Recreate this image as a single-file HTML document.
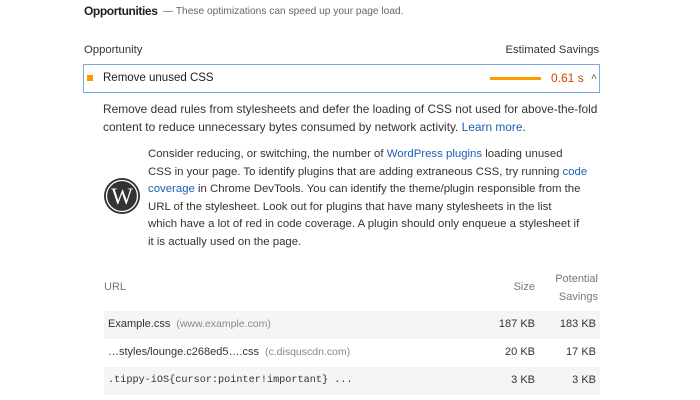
<!DOCTYPE html>
<html><head><style>
*{margin:0;padding:0;box-sizing:border-box}
body{width:700px;height:400px;background:#fff;font-family:"Liberation Sans",sans-serif;color:#212121;position:relative;overflow:hidden}
.a{position:absolute;white-space:nowrap}
a{color:#1a5fb4;text-decoration:none}
.p{color:#333}
</style></head><body>
<div class="a" style="left:84px;top:4px;font-size:12px;font-weight:bold;color:#212121;letter-spacing:-0.4px">Opportunities</div>
<div class="a" style="left:163px;top:6px;font-size:10.2px;color:#666">— These optimizations can speed up your page load.</div>
<div class="a" style="left:84px;top:44px;font-size:11.3px;color:#333">Opportunity</div>
<div class="a" style="right:101px;top:44px;font-size:11.3px;color:#333">Estimated Savings</div>
<div class="a" style="left:83px;top:64px;width:517px;height:29px;border:1px solid #7aa7e6"></div>
<div class="a" style="left:87px;top:75px;width:6px;height:6px;background:#f90"></div>
<div class="a" style="left:103px;top:72px;font-size:11.5px;color:#212121">Remove unused CSS</div>
<div class="a" style="left:490px;top:77px;width:51px;height:3px;background:#f90"></div>
<div class="a" style="left:551px;top:71px;font-size:12px;color:#d14900">0.61 s</div>
<div class="a" style="left:591px;top:72px;font-size:10px;color:#555">&#x2c4;</div>
<div class="a p" style="left:103px;top:100px;font-size:11.9px;line-height:18px">Remove dead rules from stylesheets and defer the loading of CSS not used for above-the-fold<br>content to reduce unnecessary bytes consumed by network activity. <a>Learn more</a>.</div>
<svg class="a" style="left:103px;top:177px" width="38" height="38" viewBox="0 0 38 38">
<circle cx="19" cy="19" r="18" fill="#333"/>
<circle cx="19" cy="19" r="15.5" fill="none" stroke="#fff" stroke-width="1.3"/>
<text x="19" y="27" text-anchor="middle" font-family="Liberation Serif,serif" font-size="23" fill="#fff">W</text>
</svg>
<div class="a p" style="left:148px;top:146px;font-size:11.4px;line-height:17.5px">Consider reducing, or switching, the number of <a>WordPress plugins</a> loading unused<br>CSS in your page. To identify plugins that are adding extraneous CSS, try running <a>code</a><br><a>coverage</a> in Chrome DevTools. You can identify the theme/plugin responsible from the<br>URL of the stylesheet. Look out for plugins that have many stylesheets in the list<br>which have a lot of red in code coverage. A plugin should only enqueue a stylesheet if<br>it is actually used on the page.</div>
<div class="a" style="left:104px;top:281px;font-size:11px;color:#777">URL</div>
<div class="a" style="right:165px;top:281px;font-size:11px;color:#777">Size</div>
<div class="a" style="right:102px;top:270px;font-size:11px;color:#777;text-align:right;line-height:18px">Potential<br>Savings</div>
<div class="a" style="left:104px;top:311px;width:496px;height:28px;background:#f5f5f5"></div>
<div class="a" style="left:104px;top:367px;width:496px;height:28px;background:#f5f5f5"></div>
<div class="a" style="left:108px;top:318px;font-size:11px;color:#333">Example.css <span style="color:#888;font-size:10.5px">&nbsp;(www.example.com)</span></div>
<div class="a" style="right:165px;top:318px;font-size:11px;color:#333">187 KB</div>
<div class="a" style="right:104px;top:318px;font-size:11px;color:#333">183 KB</div>
<div class="a" style="left:108px;top:346px;font-size:11px;color:#333">…styles/lounge.c268ed5….css <span style="color:#888;font-size:10.5px">&nbsp;(c.disquscdn.com)</span></div>
<div class="a" style="right:165px;top:346px;font-size:11px;color:#333">20 KB</div>
<div class="a" style="right:104px;top:346px;font-size:11px;color:#333">17 KB</div>
<div class="a" style="left:108px;top:375px;font-size:10.2px;color:#333;font-family:'Liberation Mono',monospace">.tippy-iOS{cursor:pointer!important} ...</div>
<div class="a" style="right:165px;top:374px;font-size:11px;color:#333">3 KB</div>
<div class="a" style="right:104px;top:374px;font-size:11px;color:#333">3 KB</div>
</body></html>
